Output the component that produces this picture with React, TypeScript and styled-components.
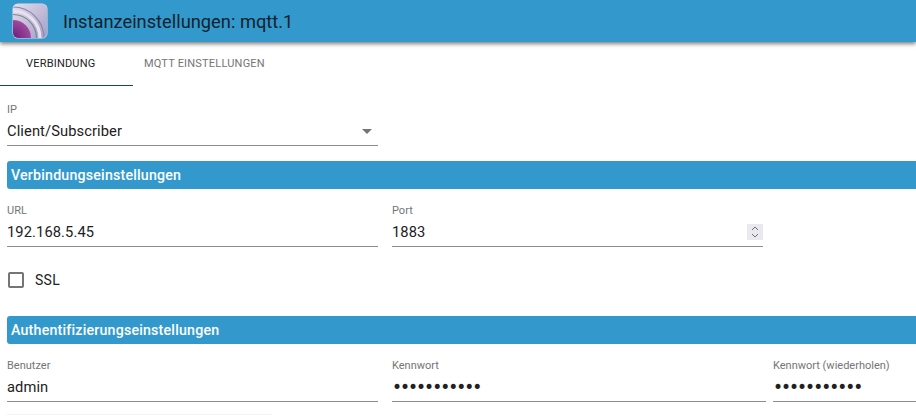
import React from 'react';
import styled, { createGlobalStyle } from 'styled-components';

const GlobalStyle = createGlobalStyle`
  html, body {
    margin: 0;
    padding: 0;
    height: 416px;
    overflow: hidden;
    background: #fff;
    font-family: Roboto, "Liberation Sans", sans-serif;
  }
`;

const Page = styled.div`
  width: 916px;
  height: 416px;
  overflow: hidden;
`;

const Header = styled.header`
  display: flex;
  align-items: center;
  gap: 15px;
  height: 42px;
  padding-left: 12px;
  background: #3399cc;
  box-shadow: 0 2px 4px rgba(0, 0, 0, 0.5);
  position: relative;
`;

const Title = styled.h1`
  margin: 0;
  font-size: 18.3px;
  font-weight: 400;
  color: #11222c;
`;

const Tabs = styled.nav`
  display: flex;
  height: 44px;
`;

const Tab = styled.div<{ $active?: boolean; $inset: number }>`
  width: 133px;
  display: flex;
  align-items: center;
  box-sizing: border-box;
  padding-left: ${({ $inset }) => $inset}px;
  font-size: 11px;
  font-weight: 400;
  letter-spacing: 0.2px;
  white-space: nowrap;
  color: ${({ $active }) => ($active ? '#222' : '#757575')};
  border-bottom: 1px solid ${({ $active }) => ($active ? '#164477' : 'transparent')};
`;

const Content = styled.main`
  display: flex;
  flex-direction: column;
  padding: 16px 0 0 7px;
`;

const Row = styled.div<{ $top?: number }>`
  display: flex;
  margin-top: ${({ $top }) => $top ?? 0}px;
`;

const Field = styled.div<{ $width: number; $gap?: number }>`
  flex: none;
  width: ${({ $width }) => $width}px;
  margin-right: ${({ $gap }) => $gap ?? 0}px;
`;

const Label = styled.label`
  display: block;
  height: 15px;
  font-size: 11px;
  line-height: 15px;
  color: #757575;
  white-space: nowrap;
`;

const Control = styled.div`
  display: flex;
  align-items: center;
  justify-content: space-between;
  height: 29px;
  box-sizing: border-box;
  border-bottom: 1px solid #8c8c8c;
`;

const Value = styled.input`
  flex: 1;
  min-width: 0;
  padding: 0;
  border: 0;
  outline: 0;
  background: transparent;
  font-family: inherit;
  font-size: 14.7px;
  letter-spacing: 0.1px;
  color: #212121;
`;

const Secret = styled(Value)`
  font-family: "DejaVu Sans", sans-serif;
  font-size: 17px;
  letter-spacing: -2px;
`;

const Caret = styled.span`
  width: 0;
  height: 0;
  margin-right: 6px;
  border-left: 5px solid transparent;
  border-right: 5px solid transparent;
  border-top: 5px solid #757575;
`;

const Spinner = styled.span`
  display: flex;
  align-items: center;
  justify-content: center;
  width: 16px;
  height: 16px;
  background: #e9e9ef;
`;

const SectionBar = styled.div<{ $top: number }>`
  height: 28px;
  margin-top: ${({ $top }) => $top}px;
  padding-left: 4px;
  border-radius: 3px 0 0 3px;
  background: #3399cc;
  color: #fff;
  font-size: 14.2px;
  font-weight: 500;
  line-height: 28px;
  letter-spacing: 0.2px;
`;

const CheckRow = styled.div`
  display: flex;
  align-items: center;
  gap: 11px;
  margin: 25px 0 0 1px;
  height: 16px;
  font-size: 14px;
  letter-spacing: 0.3px;
  color: #212121;
`;

const CheckBox = styled.span`
  width: 16px;
  height: 16px;
  box-sizing: border-box;
  border: 2px solid #757575;
  border-radius: 2px;
`;

const FaintRule = styled.div`
  width: 265px;
  height: 1px;
  margin-top: 12px;
  background: #f3f3f3;
`;

const AppLogo = () => (
  <svg width="36" height="36" viewBox="0 0 36 36">
    <defs>
      <linearGradient id="logoBg" x1="0" y1="0" x2="1" y2="1">
        <stop offset="0" stopColor="#e4e0ec" />
        <stop offset="0.6" stopColor="#bdb7d4" />
        <stop offset="1" stopColor="#a39dc4" />
      </linearGradient>
      <radialGradient id="logoCore" cx="0" cy="1" r="1">
        <stop offset="0" stopColor="#6a1b78" />
        <stop offset="1" stopColor="#a04a9e" />
      </radialGradient>
      <clipPath id="logoClip">
        <rect x="1" y="1" width="34" height="34" rx="5" />
      </clipPath>
    </defs>
    <rect x="0.5" y="0.5" width="35" height="35" rx="5.5" fill="#dcdcec" />
    <g clipPath="url(#logoClip)">
      <rect width="36" height="36" fill="url(#logoBg)" />
      <circle cx="1" cy="35" r="31" fill="none" stroke="#8d86ad" strokeWidth="1.2" />
      <circle cx="1" cy="35" r="27" fill="none" stroke="#e6e2ef" strokeWidth="3" />
      <circle cx="1" cy="35" r="23.5" fill="none" stroke="#87809f" strokeWidth="1.2" />
      <path d="M1 17a18 18 0 0 1 18 18H1z" fill="url(#logoCore)" />
    </g>
  </svg>
);

const SpinnerIcon = () => (
  <svg width="8" height="12" viewBox="0 0 8 12" fill="none" stroke="#6f6f78" strokeWidth="1">
    <path d="M1 4l3-3 3 3" />
    <path d="M1 8l3 3 3-3" />
  </svg>
);

const App: React.FC = () => {
  const secret = 'xxxxxxxxxxx';

  return (
    <Page>
      <GlobalStyle />
      <Header>
        <AppLogo />
        <Title>Instanzeinstellungen: mqtt.1</Title>
      </Header>
      <Tabs>
        <Tab $active $inset={26}>VERBINDUNG</Tab>
        <Tab $inset={11}>MQTT EINSTELLUNGEN</Tab>
      </Tabs>
      <Content>
        <Field $width={371}>
          <Label>IP</Label>
          <Control>
            <Value readOnly value="Client/Subscriber" />
            <Caret />
          </Control>
        </Field>

        <SectionBar $top={15}>Verbindungseinstellungen</SectionBar>

        <Row $top={14}>
          <Field $width={371} $gap={14}>
            <Label>URL</Label>
            <Control>
              <Value readOnly value="192.168.5.45" />
            </Control>
          </Field>
          <Field $width={371}>
            <Label>Port</Label>
            <Control>
              <Value readOnly value="1883" />
              <Spinner>
                <SpinnerIcon />
              </Spinner>
            </Control>
          </Field>
        </Row>

        <CheckRow>
          <CheckBox />
          SSL
        </CheckRow>

        <SectionBar $top={28}>Authentifizierungseinstellungen</SectionBar>

        <Row $top={14}>
          <Field $width={371} $gap={14}>
            <Label>Benutzer</Label>
            <Control>
              <Value readOnly value="admin" />
            </Control>
          </Field>
          <Field $width={374} $gap={7}>
            <Label>Kennwort</Label>
            <Control>
              <Secret readOnly type="password" value={secret} />
            </Control>
          </Field>
          <Field $width={150}>
            <Label>Kennwort (wiederholen)</Label>
            <Control>
              <Secret readOnly type="password" value={secret} />
            </Control>
          </Field>
        </Row>

        <FaintRule />
      </Content>
    </Page>
  );
};

export default App;
